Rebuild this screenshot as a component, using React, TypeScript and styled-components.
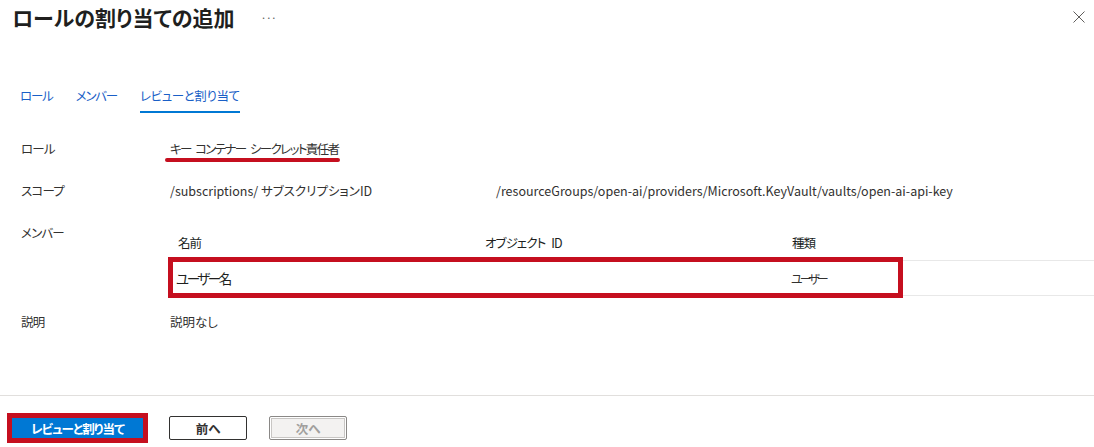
import styled, { createGlobalStyle } from "styled-components";

const GlobalStyle = createGlobalStyle`
  html, body {
    margin: 0;
    padding: 0;
    background: #fff;
  }
  body {
    font-family: "Noto Sans CJK JP", "Noto Sans", sans-serif;
    font-size: 13px;
    color: #323130;
    font-feature-settings: "palt";
  }
`;

const tabs = [
  { label: "ロール", active: false },
  { label: "メンバー", active: false },
  { label: "レビューと割り当て", active: true },
];

function App() {
  return (
    <Page>
      <GlobalStyle />
      <Header>
        <TitleGroup>
          <Title>ロールの割り当ての追加</Title>
          <More>···</More>
        </TitleGroup>
        <CloseButton aria-label="close">
          <svg width="12" height="12" viewBox="0 0 12 12">
            <path d="M0.5 0.5 L11.5 11.5 M11.5 0.5 L0.5 11.5" stroke="#605e5c" strokeWidth="1" fill="none" />
          </svg>
        </CloseButton>
      </Header>

      <Tabs>
        {tabs.map((t) => (
          <Tab key={t.label} $active={t.active}>
            {t.label}
          </Tab>
        ))}
      </Tabs>

      <Details>
        <Label>ロール</Label>
        <Value>
          <Marked>キー コンテナー シークレット責任者</Marked>
        </Value>

        <Label>スコープ</Label>
        <ScopeValue>
          <span>/subscriptions/ サブスクリプションID</span>
          <span>/resourceGroups/open-ai/providers/Microsoft.KeyVault/vaults/open-ai-api-key</span>
        </ScopeValue>

        <Label>メンバー</Label>
        <Table>
          <HeadRow>
            <HeadCell>名前</HeadCell>
            <HeadCell>オブジェクト ID</HeadCell>
            <HeadCell>種類</HeadCell>
          </HeadRow>
          <BodyRow>
            <NameCell>ユーザー名</NameCell>
            <Cell></Cell>
            <TypeCell>ユーザー</TypeCell>
            <Highlight />
          </BodyRow>
        </Table>

        <Label>説明</Label>
        <Value>説明なし</Value>
      </Details>

      <Footer>
        <PrimaryButton>レビューと割り当て</PrimaryButton>
        <Button>前へ</Button>
        <Button disabled>次へ</Button>
      </Footer>
    </Page>
  );
}

const Page = styled.div`
  width: 1094px;
  height: 447px;
  display: flex;
  flex-direction: column;
  overflow: hidden;
`;

const Header = styled.div`
  display: flex;
  justify-content: space-between;
  align-items: flex-start;
  padding: 3px 8px 0 12px;
  height: 32px;
`;

const TitleGroup = styled.div`
  display: flex;
  align-items: center;
  gap: 26px;
`;

const Title = styled.h1`
  margin: 0;
  font-size: 21px;
  font-weight: 700;
  line-height: 28px;
  color: #201f1e;
`;

const More = styled.span`
  color: #605e5c;
  font-size: 11px;
  letter-spacing: -1px;
`;

const CloseButton = styled.button`
  border: none;
  background: none;
  padding: 0;
  margin-top: 8px;
  margin-right: 1px;
  width: 12px;
  height: 12px;
  display: flex;
`;

const Tabs = styled.div`
  display: flex;
  gap: 23px;
  padding-left: 20px;
  margin-top: 52px;
`;

const Tab = styled.div<{ $active: boolean }>`
  color: #1a5fc7;
  font-size: 12.5px;
  letter-spacing: ${(p) => (p.$active ? "-0.4px" : "-1.2px")};
  line-height: 18px;
  padding-bottom: 6px;
  border-bottom: 2px solid ${(p) => (p.$active ? "#0078d4" : "transparent")};
`;

const Details = styled.div`
  display: grid;
  grid-template-columns: 149px 1fr;
  padding-left: 21px;
  margin-top: 27px;
`;

const Label = styled.div`
  line-height: 18px;
  min-height: 42px;
  font-size: 12.5px;
  letter-spacing: -0.8px;
  color: #323130;
`;

const Value = styled.div`
  line-height: 18px;
  font-size: 12.5px;
`;

const Marked = styled.span`
  position: relative;
  display: inline-block;
  letter-spacing: -1.6px;
  word-spacing: 3px;
  &::after {
    content: "";
    position: absolute;
    left: -5px;
    right: -1px;
    bottom: -4px;
    height: 4px;
    border-radius: 2px;
    background: #c50f1f;
  }
`;

const ScopeValue = styled.div`
  display: grid;
  grid-template-columns: 326px 1fr;
  line-height: 18px;
  font-size: 12.5px;
`;

const Table = styled.div`
  margin-bottom: 17px;
  margin-right: -8px;
`;

const HeadRow = styled.div`
  display: grid;
  grid-template-columns: 307px 307px 1fr;
  height: 36px;
  align-items: center;
  border-bottom: 1px solid #e8e8e8;
`;

const HeadCell = styled.div`
  padding-left: 8px;
  font-size: 12.5px;
  letter-spacing: -0.9px;
  word-spacing: 4px;
  color: #201f1e;
`;

const BodyRow = styled.div`
  position: relative;
  display: grid;
  grid-template-columns: 307px 307px 1fr;
  height: 34px;
  align-items: center;
  border-bottom: 1px solid #e8e8e8;
`;

const Cell = styled.div`
  font-size: 12.5px;
  color: #323130;
`;

const NameCell = styled(Cell)`
  padding-left: 6px;
  font-size: 13.5px;
  letter-spacing: -2.4px;
  color: #201f1e;
`;

const TypeCell = styled(Cell)`
  padding-left: 7px;
  font-size: 12px;
  letter-spacing: -3px;
`;

const Highlight = styled.span`
  position: absolute;
  left: -2px;
  top: -4px;
  width: 735px;
  height: 41px;
  border: 5px solid #c50f1f;
  box-sizing: border-box;
  pointer-events: none;
`;

const Footer = styled.div`
  margin-top: auto;
  border-top: 1px solid #e1dfdd;
  height: 52px;
  display: flex;
  align-items: flex-start;
  gap: 22px;
  padding: 20px 0 0 12px;
  box-sizing: border-box;
`;

const Button = styled.button`
  font-family: inherit;
  font-feature-settings: "palt";
  font-size: 12.5px;
  font-weight: 600;
  height: 24px;
  width: 78px;
  padding: 0;
  border-radius: 2px;
  background: #fff;
  border: 1px solid #323130;
  color: #323130;
  &:disabled {
    background: #f3f2f1;
    color: #a19f9d;
    border: 1px solid #8a8886;
    box-shadow: inset 0 0 0 1px #fff, inset 0 0 0 2px #c8c6c4;
  }
`;

const PrimaryButton = styled(Button)`
  width: 131px;
  background: #0078d4;
  color: #fff;
  border: none;
  border-radius: 0;
  outline: 5px solid #c50f1f;
  margin-top: 2px;
  height: 20px;
  margin-right: 4px;
  letter-spacing: -1px;
`;

export default App;
